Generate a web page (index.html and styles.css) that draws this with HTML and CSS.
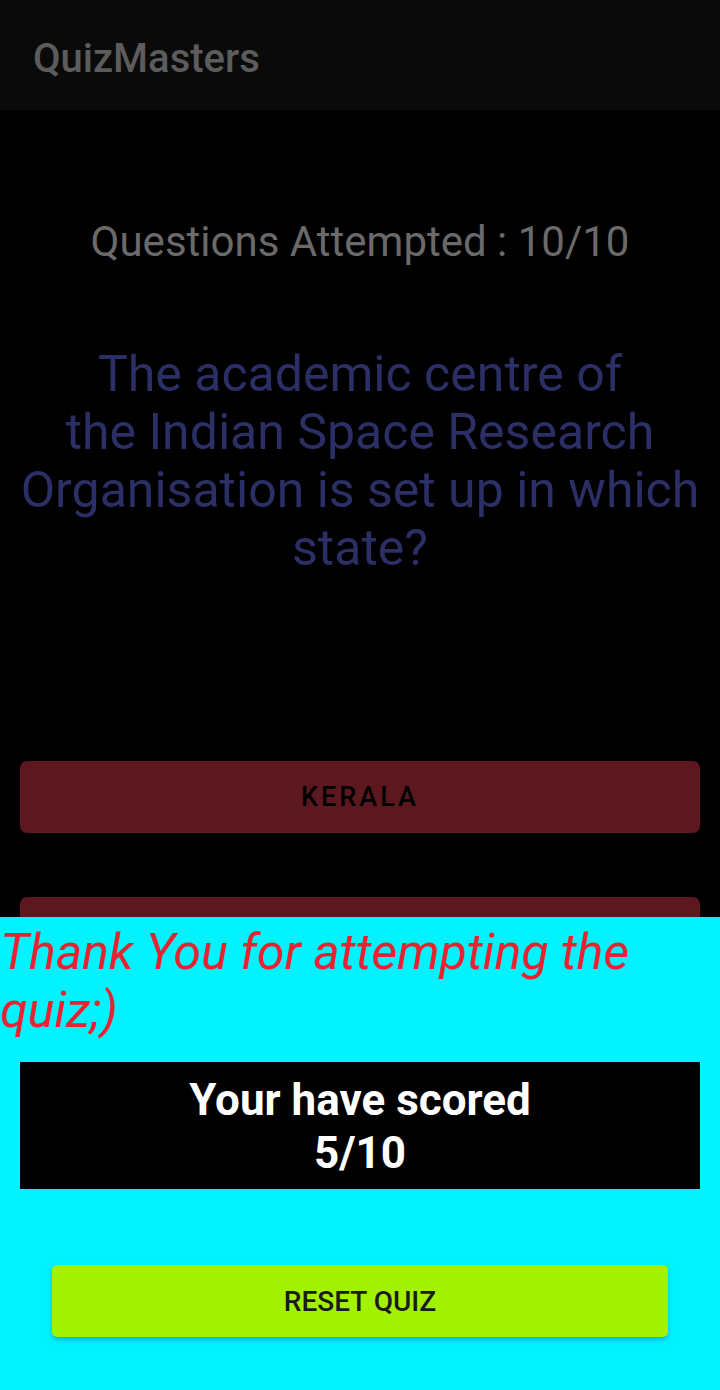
FILE: index.html
```html
<!DOCTYPE html>
<html>
<head>
<meta charset="utf-8">
<link rel="stylesheet" href="styles.css">
</head>
<body>
<div class="screen">
  <header class="appbar"><h1 class="title">QuizMasters</h1></header>
  <main class="quiz">
    <p class="attempted">Questions Attempted : 10/10</p>
    <p class="question">The academic centre of<br>the Indian Space Research Organisation is set up in which state?</p>
    <div class="options">
      <button class="option">KERALA</button>
      <button class="option" aria-label="option 2"></button>
    </div>
  </main>
  <section class="sheet">
    <p class="thanks">Thank You for attempting the quiz;)</p>
    <div class="score">Your have scored<br>5/10</div>
    <button class="reset">RESET QUIZ</button>
  </section>
</div>
</body>
</html>
```
FILE: styles.css
```css
html, body {
  margin: 0;
  padding: 0;
  background: #000;
}
.screen {
  position: relative;
  width: 720px;
  height: 1390px;
  overflow: hidden;
  background: #000;
  font-family: Roboto, "Noto Sans", sans-serif;
}
.appbar {
  height: 110px;
  background: #0a0a0a;
  display: flex;
  align-items: center;
  padding-left: 33px;
}
.title {
  margin: 0;
  font-size: 40px;
  font-weight: 500;
  color: #5c5c5c;
  padding-top: 6px;
}
.quiz {
  display: flex;
  flex-direction: column;
  align-items: center;
}
.attempted {
  margin: 107px 0 0;
  font-size: 42px;
  line-height: 50px;
  color: #6a6a6a;
}
.question {
  margin: 78px 0 0;
  padding: 0 20px;
  font-size: 50px;
  line-height: 58px;
  text-align: center;
  color: #2c2f66;
}
.options {
  align-self: stretch;
  display: flex;
  flex-direction: column;
  gap: 64px;
  padding: 0 20px;
  margin-top: 184px;
}
.option {
  height: 72px;
  border: none;
  border-radius: 7px;
  background: #5c181e;
  color: #000;
  font-family: Roboto, sans-serif;
  font-size: 27px;
  font-weight: 500;
  letter-spacing: 3px;
}
.sheet {
  position: absolute;
  left: 0;
  right: 0;
  bottom: 0;
  height: 473px;
  background: #00f4ff;
  display: flex;
  flex-direction: column;
}
.thanks {
  margin: 0;
  padding-top: 6px;
  font-size: 50px;
  line-height: 58px;
  font-style: italic;
  color: #e8232f;
}
.score {
  margin: 23px 20px 0;
  padding: 12px 0 9px;
  background: #000;
  color: #fff;
  font-size: 44px;
  line-height: 53px;
  font-weight: 700;
  text-align: center;
}
.reset {
  margin: 76px 52px 0;
  height: 72px;
  border: none;
  border-radius: 5px;
  background: #a2f200;
  color: #1a1a1a;
  font-family: Roboto, sans-serif;
  font-size: 28px;
  font-weight: 500;
  box-shadow: 0 3px 5px rgba(0, 80, 90, 0.35);
}
```
